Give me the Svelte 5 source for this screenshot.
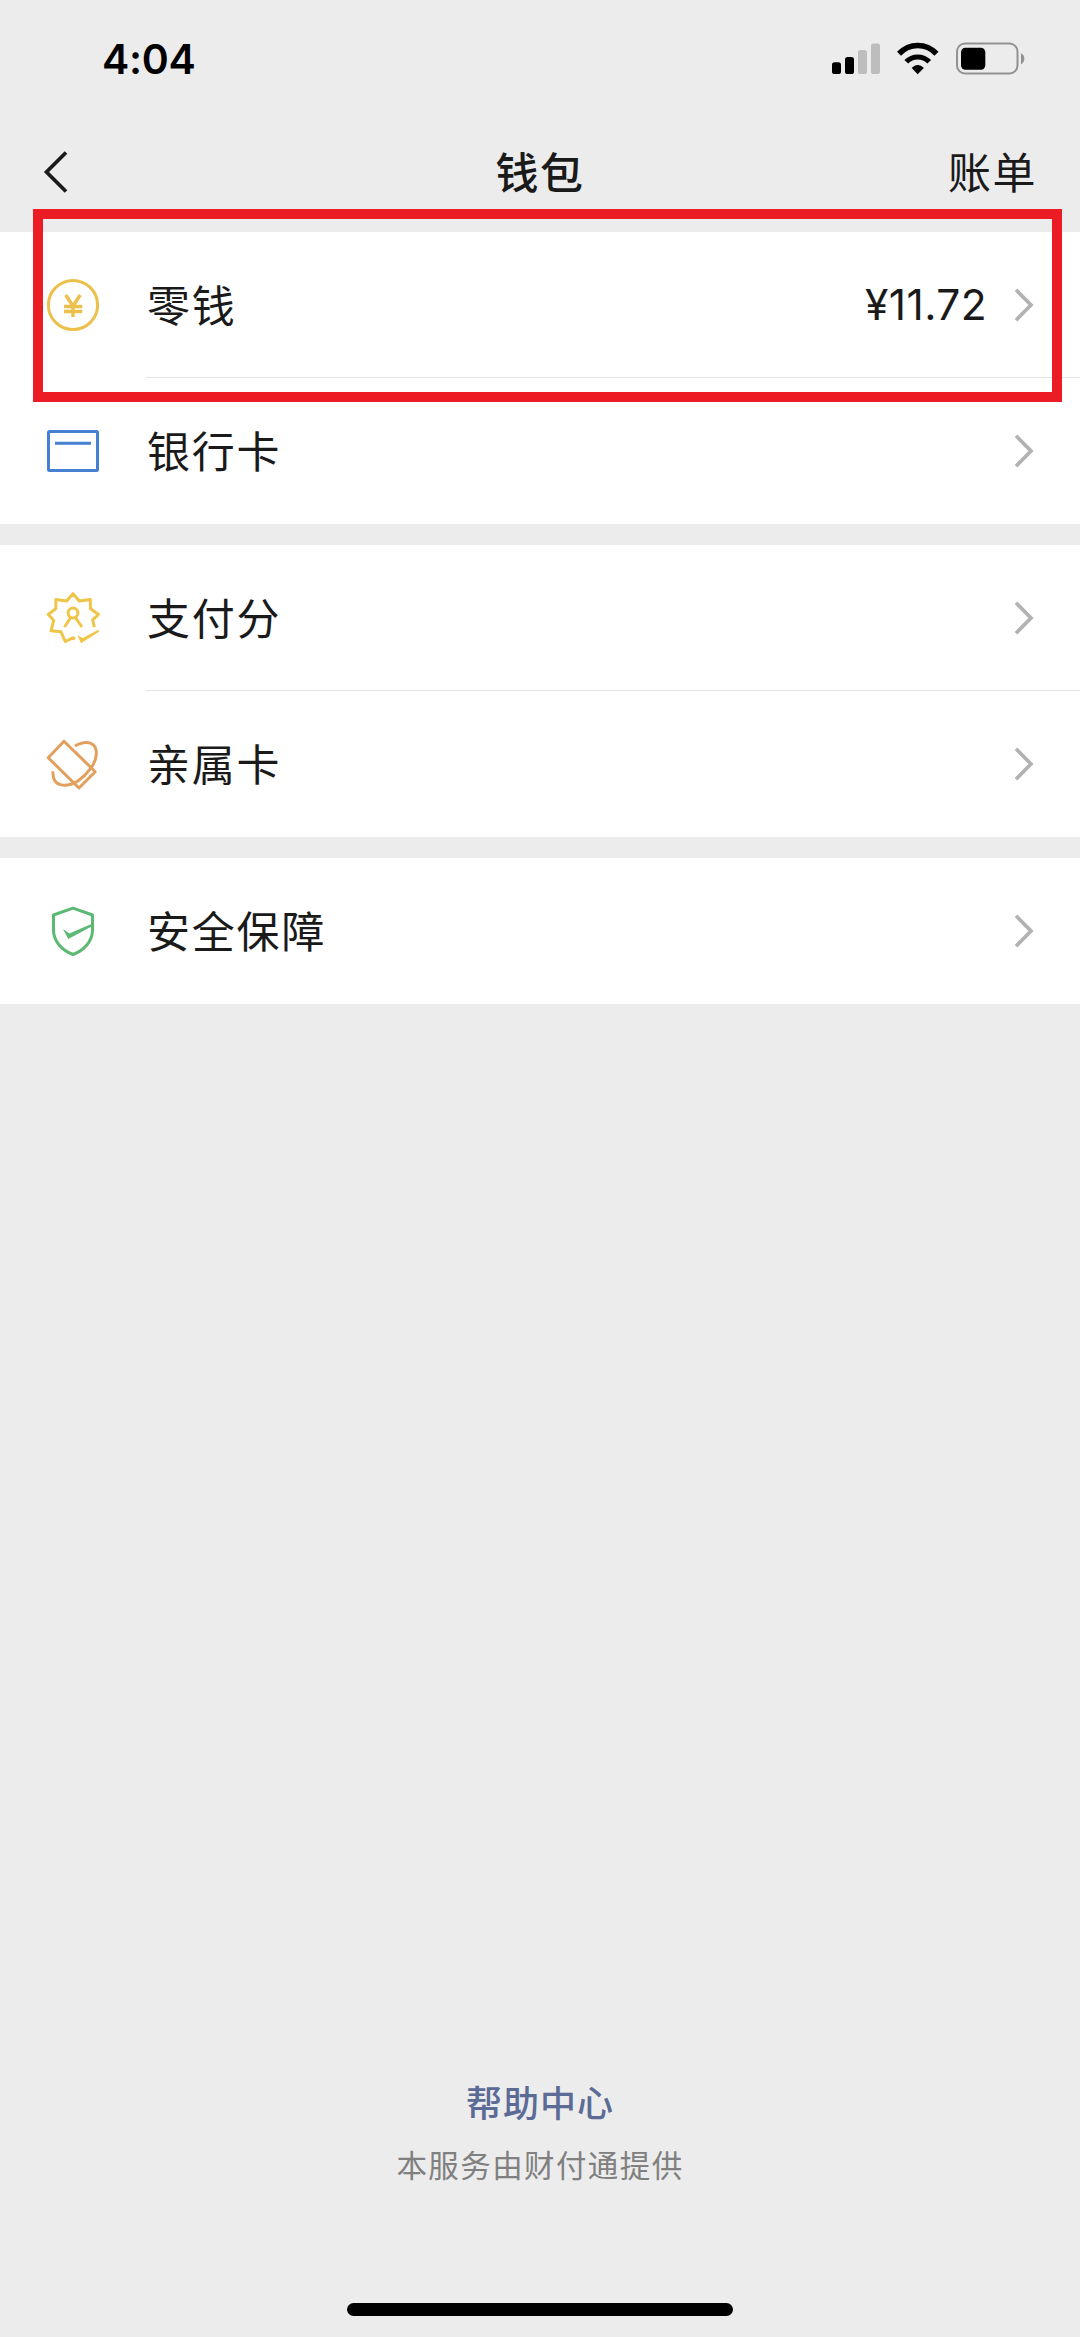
<script lang="ts">
	interface WalletItem {
		icon: 'coin' | 'card' | 'score' | 'family' | 'shield';
		label: string;
		value?: string;
	}

	const groups: WalletItem[][] = [
		[
			{ icon: 'coin', label: '零钱', value: '¥11.72' },
			{ icon: 'card', label: '银行卡' }
		],
		[
			{ icon: 'score', label: '支付分' },
			{ icon: 'family', label: '亲属卡' }
		],
		[{ icon: 'shield', label: '安全保障' }]
	];
</script>

<div class="screen">
	<div class="status-bar">
		<span class="time">4:04</span>
		<svg class="indicators" width="196" height="36" viewBox="830 41 196 36">
			<rect x="832" y="62.3" width="9" height="11.7" rx="2.6" />
			<rect x="845" y="57" width="9" height="17" rx="2.6" />
			<rect x="858" y="50" width="9" height="24" rx="2.6" fill="#bdbdbd" />
			<rect x="871" y="43.5" width="9" height="30.5" rx="2.6" fill="#bdbdbd" />
			<g fill="none" stroke="#000">
				<path d="M899 53.8C909.5 42.8 926 42.8 936.5 53.8" stroke-width="5.6" />
				<path d="M906.3 61.8C912.5 55.4 923 55.4 929.2 61.8" stroke-width="5.2" />
			</g>
			<path d="M911.7 68C915.5 64 920 64 923.8 68L917.7 74.2Z" />
			<rect x="957" y="43.5" width="60.5" height="30" rx="8" fill="none" stroke="#929292" stroke-width="2" />
			<rect x="961" y="47.7" width="24.3" height="22" rx="4.5" />
			<path d="M1021 53.3C1025.5 55.5 1025.5 62 1021 64.3Z" fill="#929292" />
		</svg>
	</div>

	<header class="nav">
		<button class="back" type="button" aria-label="返回">
			<svg width="26" height="46" viewBox="0 0 26 46">
				<path d="M24 3.5L4.5 23L24 42.5" fill="none" stroke="#1a1a1a" stroke-width="3.7" />
			</svg>
		</button>
		<h1>钱包</h1>
		<button class="bill" type="button">账单</button>
	</header>

	<main>
		{#each groups as group}
			<section class="group">
				{#each group as item}
					<div class="row">
						<svg class="icon {item.icon}" width="60" height="60" viewBox="0 0 60 60">
							{#if item.icon === 'coin'}
								<circle cx="30" cy="30" r="24.6" />
								<path class="yen" d="M22.7 20L30 31L37.3 20M21 31.5H39.3M21 36.5H39.3M30 30V42" />
							{:else if item.icon === 'card'}
								<rect x="5.5" y="10.5" width="49" height="39" rx="1" />
								<path d="M12 22.3H48" />
							{:else if item.icon === 'score'}
								<path d="M51.3 39.3L49.7 31.8L55.5 26.5L47.5 20.7L47.3 11.5L36.3 12.9L30 5.7L23.7 12.9L12.9 11.5L12.8 20.7L5.2 26.5L10.7 32.3L8 42.8L18 43.8L22.2 53.5L30 49.8L32 51.3" />
								<circle cx="30" cy="25" r="4.9" />
								<path d="M27.7 29.5L21.5 39M32.3 29.5L39 39" />
								<path class="solid" d="M34.5 47.5L39.8 50L55.3 41.8L56 43.8L38 55.3Z" />
							{:else if item.icon === 'family'}
								<path d="M21 7.2L5.2 23.7L36 54L52.2 37.7Z" />
								<path d="M32 12C44 5.5 53.5 8.5 53.4 19.5C53 30 44 41 34.5 47.2C24.5 53 9 54.5 10 37.3" />
							{:else}
								<path d="M30 7.2L49.5 14V29C49.5 40 41.5 49 30 53.5C18.5 49 10.5 40 10.5 29V14Z" />
								<path class="solid" d="M20 28L26.3 32.4L49 22.8V25.3L25.3 38Z" />
							{/if}
						</svg>
						<div class="content">
							<span class="label">{item.label}</span>
							{#if item.value}
								<span class="value">{item.value}</span>
							{/if}
							<svg class="chevron" width="22" height="36" viewBox="0 0 22 36">
								<path d="M3 2.8L18 18L3 33.2" />
							</svg>
						</div>
					</div>
				{/each}
			</section>
		{/each}
	</main>

	<footer>
		<a class="help" href="#help">帮助中心</a>
		<p>本服务由财付通提供</p>
		<div class="home-indicator"></div>
	</footer>

	<div class="highlight"></div>
</div>

<style>
	:global(body) {
		margin: 0;
		background: #ececec;
	}

	.screen {
		position: relative;
		display: flex;
		flex-direction: column;
		box-sizing: border-box;
		width: 1080px;
		height: 2337px;
		overflow: hidden;
		background: #ececec;
		color: #1a1a1a;
		font-family: 'Noto Sans CJK SC', sans-serif;
	}

	.status-bar {
		display: flex;
		align-items: center;
		justify-content: space-between;
		box-sizing: border-box;
		height: 118px;
		padding: 0 54px 0 102px;
	}

	.time {
		font-family: Inter, sans-serif;
		font-size: 41px;
		font-weight: 600;
		letter-spacing: -0.3px;
		color: #000;
	}

	.nav {
		display: grid;
		grid-template-columns: 1fr auto 1fr;
		align-items: center;
		box-sizing: border-box;
		height: 114px;
		padding: 0 43px 6px 42px;
	}

	.nav button {
		padding: 0;
		border: none;
		background: none;
		color: inherit;
		font: inherit;
	}

	.back {
		display: flex;
	}

	h1 {
		margin: 0;
		padding: 0 0 4px 1px;
		font-size: 43px;
		font-weight: 500;
		line-height: 60px;
		letter-spacing: 1.5px;
	}

	.nav .bill {
		justify-self: end;
		padding-bottom: 4px;
		font-size: 43px;
		line-height: 60px;
		letter-spacing: 1.5px;
	}

	main {
		display: flex;
		flex-direction: column;
		gap: 21px;
	}

	.group {
		background: #fff;
	}

	.row {
		display: flex;
		align-items: center;
		height: 146px;
		padding-left: 43px;
	}

	.icon {
		flex: none;
		margin-right: 43px;
		fill: none;
		stroke: currentColor;
		stroke-width: 3;
		stroke-linejoin: round;
	}

	.icon .solid {
		fill: currentColor;
		stroke: none;
	}

	.icon .yen {
		stroke-width: 3.4;
	}

	.coin {
		color: #ecc04c;
	}

	.card {
		color: #4580d3;
	}

	.score {
		color: #efc547;
	}

	.family {
		color: #e2a05c;
	}

	.shield {
		color: #5bb974;
	}

	.content {
		display: flex;
		flex: 1;
		align-items: center;
		box-sizing: border-box;
		height: 100%;
		padding-right: 45px;
		border-bottom: 1px solid #e4e4e4;
	}

	.row:last-child .content {
		border-bottom-color: transparent;
	}

	.label {
		padding: 0 0 4px 1px;
		font-size: 43px;
		line-height: 60px;
		letter-spacing: 1.8px;
	}

	.value {
		margin-left: auto;
		margin-right: 26px;
		font-family: Inter, sans-serif;
		font-size: 42.5px;
		font-weight: 400;
		letter-spacing: 0.4px;
	}

	.chevron {
		margin-left: auto;
		fill: none;
		stroke: #b2b2b2;
		stroke-width: 3.7;
	}

	.value + .chevron {
		margin-left: 0;
	}

	footer {
		display: flex;
		flex-direction: column;
		align-items: center;
		margin-top: auto;
	}

	.help {
		font-size: 36px;
		font-weight: 500;
		line-height: 52px;
		letter-spacing: 1px;
		color: #5b6b96;
		text-decoration: none;
	}

	footer p {
		margin: 14px 0 0;
		font-size: 30.5px;
		line-height: 46px;
		letter-spacing: 1.4px;
		color: #808080;
	}

	.home-indicator {
		width: 386px;
		height: 13px;
		margin: 116px 0 21px;
		border-radius: 7px;
		background: #000;
	}

	/* marker frame laid over the balance row */
	.highlight {
		position: absolute;
		top: 209px;
		left: 33px;
		box-sizing: border-box;
		width: 1029px;
		height: 193px;
		border: 10px solid #ec1c24;
		pointer-events: none;
	}
</style>
